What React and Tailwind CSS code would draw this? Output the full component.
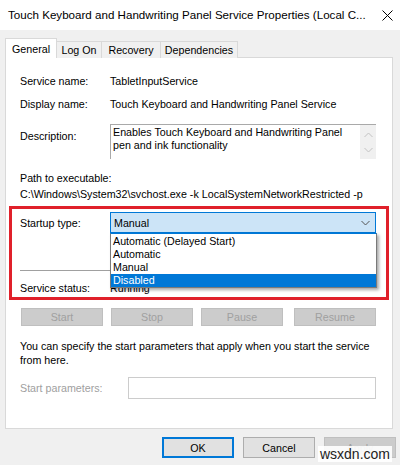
import React from "react";

const Chevron = ({ up, className }) => (
  <svg width="9" height="6" viewBox="0 0 9 6" className={className}>
    <path d={up ? "M0.5 5 L4.5 1 L8.5 5" : "M0.5 1 L4.5 5 L8.5 1"} fill="none" stroke="currentColor" strokeWidth="1" />
  </svg>
);

export default function App() {
  return (
    <div className="relative w-[400px] h-[465px] overflow-hidden bg-[#f0f0f0] text-black text-[10.7px] leading-[16px] font-['Liberation_Sans',Arial,sans-serif]">
      {/* Title bar */}
      <div className="h-[30px] bg-white flex items-center pl-[8px] pr-[7px]">
        <div className="flex-1 text-[11.6px] whitespace-nowrap">Touch Keyboard and Handwriting Panel Service Properties (Local C...</div>
        <svg width="11" height="11" viewBox="0 0 11 11">
          <path d="M0.5 0.5 L10.5 10.5 M10.5 0.5 L0.5 10.5" stroke="#000" strokeWidth="1" />
        </svg>
      </div>

      <div className="mt-[8px] px-[5px]">
        {/* Tabs */}
        <div className="flex items-end h-[20px] relative z-10">
          <div className="w-[52px] h-[20px] bg-white border border-b-0 border-[#d9d9d9] flex items-start justify-center pt-[2px]">General</div>
          <div className="w-[45px] h-[17px] bg-[#f0f0f0] border-t border-r border-[#d9d9d9] flex items-center justify-center">Log On</div>
          <div className="w-[59px] h-[17px] bg-[#f0f0f0] border-t border-r border-[#d9d9d9] flex items-center justify-center">Recovery</div>
          <div className="w-[77px] h-[17px] bg-[#f0f0f0] border-t border-r border-[#d9d9d9] flex items-center justify-center">Dependencies</div>
        </div>

        {/* Panel */}
        <div className="relative -mt-px w-[388px] h-[372px] bg-white border border-[#d9d9d9] pl-[14px] pt-[15px]">
          <div className="flex h-[16px]">
            <div className="w-[90px]">Service name:</div>
            <div>TabletInputService</div>
          </div>
          <div className="flex h-[16px] mt-[7px]">
            <div className="w-[90px]">Display name:</div>
            <div>Touch Keyboard and Handwriting Panel Service</div>
          </div>
          <div className="flex mt-[12px]">
            <div className="w-[90px] pt-[4px]">Description:</div>
            <div className="w-[266px] h-[35px] flex border-t border-l border-[#a9a9a9]">
              <div className="flex-1 pl-[2px] pt-px leading-[13px]">
                Enables Touch Keyboard and Handwriting Panel<br />pen and ink functionality
              </div>
              <div className="w-[16px] bg-[#f0f0f0] flex flex-col items-center justify-center gap-[9px] text-[#c2c2c2]">
                <Chevron up />
                <Chevron />
              </div>
            </div>
          </div>
          <div className="mt-[11px]">Path to executable:</div>
          <div className="whitespace-nowrap">C:\Windows\System32\svchost.exe -k LocalSystemNetworkRestricted -p</div>

          <div className="flex mt-[10px] items-center">
            <div className="w-[90px]">Startup type:</div>
            <div className="relative w-[266px] h-[21px] bg-[#cce4f7] border border-[#0078d7] flex items-center pl-[3px] pr-[5px]">
              <div className="flex-1">Manual</div>
              <Chevron className="text-[#555]" />
              <div className="absolute left-[-1px] top-[20px] w-[267px] h-[55px] bg-white border border-[#7a7a7a] border-t-[#0078d7] shadow-[2px_2px_3px_rgba(0,0,0,0.35)] z-20 flex flex-col pt-px leading-[13px]">
                <div className="h-[13px] pl-[2px]">Automatic (Delayed Start)</div>
                <div className="h-[13px] pl-[2px]">Automatic</div>
                <div className="h-[13px] pl-[2px]">Manual</div>
                <div className="h-[13px] pl-[2px] bg-[#0078d7] text-white">Disabled</div>
              </div>
            </div>
          </div>

          <div className="mt-[37px] w-[356px] h-px bg-[#a0a0a0]" />
          <div className="flex h-[16px] mt-[9px]">
            <div className="w-[90px]">Service status:</div>
            <div>Running</div>
          </div>

          <div className="flex mt-[12px] text-[#a0a0a0]">
            <div className="ml-px w-[82px] h-[18px] bg-[#cccccc] border border-[#bfbfbf] flex items-center justify-center">Start</div>
            <div className="ml-[8px] w-[82px] h-[18px] bg-[#cccccc] border border-[#bfbfbf] flex items-center justify-center">Stop</div>
            <div className="ml-[8px] w-[82px] h-[18px] bg-[#cccccc] border border-[#bfbfbf] flex items-center justify-center">Pause</div>
            <div className="ml-[11px] w-[82px] h-[18px] bg-[#cccccc] border border-[#bfbfbf] flex items-center justify-center">Resume</div>
          </div>

          <div className="mt-[13px] leading-[14px] w-[356px]">
            You can specify the start parameters that apply when you start the service<br />from here.
          </div>

          <div className="flex items-center mt-[10px]">
            <div className="w-[108px] text-[#a0a0a0]">Start parameters:</div>
            <div className="w-[248px] h-[22px] bg-white border border-[#cccccc]" />
          </div>

          {/* Red highlight */}
          <div className="absolute left-[3px] top-[148px] w-[380px] h-[94px] border-[3px] border-[#e0202a] pointer-events-none z-30" />
        </div>
      </div>

      {/* Bottom buttons */}
      <div className="flex justify-end gap-[9px] pr-[4px] mt-[8px]">
        <div className="w-[72px] h-[21px] bg-[#e1e1e1] border-2 border-[#0078d7] flex items-center justify-center">OK</div>
        <div className="w-[72px] h-[21px] bg-[#e1e1e1] border border-[#adadad] flex items-center justify-center">Cancel</div>
        <div className="w-[72px] h-[21px] bg-[#cccccc] border border-[#bfbfbf] flex items-center justify-center text-[#a0a0a0]">Apply</div>
      </div>

      {/* Watermark */}
      <div className="absolute right-[8px] bottom-[3px] bg-white/90 px-[2px] text-[14px] leading-[16px] text-[#222] font-['Liberation_Sans',sans-serif]">wsxdn.com</div>
    </div>
  );
}
